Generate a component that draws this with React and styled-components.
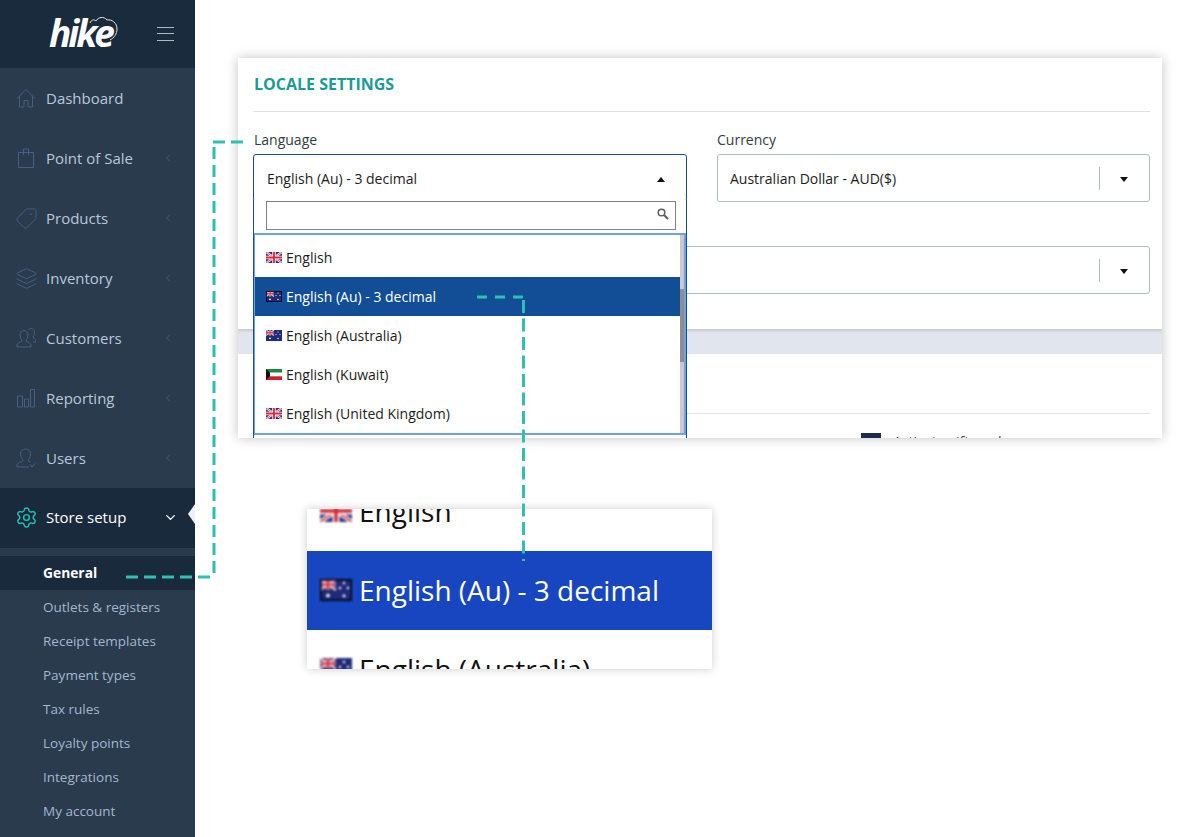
import styled, { createGlobalStyle } from "styled-components"
import { Settings, Tag, Layers, ChevronLeft, ChevronDown } from "lucide-react"

const GlobalStyle = createGlobalStyle`
    html, body {
        margin: 0;
        padding: 0;
        background: #fff;
        font-family: "Open Sans", "Noto Sans", sans-serif;
    }
    * { box-sizing: border-box; }
`

const Page = styled.div`
    position: relative;
    display: flex;
    width: 1185px;
    height: 837px;
    overflow: hidden;
    background: #fff;
`

/* sidebar */
const Sidebar = styled.aside`
    width: 195px;
    flex-shrink: 0;
    background: #293b4d;
`
const LogoBar = styled.div`
    height: 68px;
    background: #1b2b3e;
    display: flex;
    align-items: center;
    padding: 0 21px 0 49px;
    justify-content: space-between;
`
const Logo = styled.div`
    position: relative;
    width: 68px;
    height: 36px;
    color: #fff;
    font-family: "Open Sans", sans-serif;
    font-size: 37px;
    font-weight: 700;
    font-style: italic;
    letter-spacing: -3px;
    line-height: 34px;
    svg {
        position: absolute;
        left: 40px;
        top: -1px;
    }
`
const Burger = styled.div`
    width: 17px;
    height: 14px;
    border-top: 1px solid #aeb8c2;
    border-bottom: 1px solid #aeb8c2;
    position: relative;
    &::after {
        content: "";
        position: absolute;
        left: 0;
        right: 0;
        top: 5px;
        height: 1px;
        background: #aeb8c2;
    }
`
const NavItem = styled.div`
    position: relative;
    height: 60px;
    display: flex;
    align-items: center;
    padding: 0 16px ${props => props.$active ? "2px" : "0"};
    gap: 10px;
    font-size: 15px;
    color: ${props => props.$active ? "#fff" : "#b9c8da"};
    font-weight: ${props => props.$active ? 500 : 400};
    background: ${props => props.$active ? "#1a2a3d" : "transparent"};
    span { flex: 1; }
    ${props => props.$active && `
        &::after {
            content: "";
            position: absolute;
            right: 0;
            top: 16px;
            border-top: 10px solid transparent;
            border-bottom: 10px solid transparent;
            border-right: 7px solid #eef1f7;
        }
    `}
`
const IconSlot = styled.div`
    width: 20px;
    height: 20px;
    flex-shrink: 0;
    display: flex;
    align-items: center;
    justify-content: center;
    color: ${props => props.$active ? "#22c1b0" : "#465f82"};
    svg {
        width: 20px;
        height: 20px;
        flex-shrink: 0;
    }
    svg.lucide {
        width: 23px;
        height: 23px;
    }
`
const SubList = styled.div`
    margin-top: 8px;
`
const SubItem = styled.div`
    height: 34px;
    display: flex;
    align-items: center;
    padding: 0 0 ${props => props.$active ? "2px" : "0"} 43px;
    font-size: ${props => props.$active ? "13.8px" : "13.5px"};
    color: ${props => props.$active ? "#fff" : "#a3b7cd"};
    font-weight: ${props => props.$active ? 700 : 400};
    background: ${props => props.$active ? "#1a2a3d" : "transparent"};
`

/* main */
const Main = styled.main`
    flex: 1;
    padding: 58px 23px 0 43px;
`
const Card = styled.section`
    width: 924px;
    height: 380px;
    background: #fff;
    overflow: hidden;
    box-shadow: 0 0 11px rgba(0, 0, 0, 0.24);
`
const Section = styled.div`
    height: 271px;
    padding: 0 12px 0 15px;
`
const Title = styled.h2`
    margin: 0 0 18px;
    height: 54px;
    padding-top: 15px;
    padding-left: 1px;
    font-size: 16px;
    line-height: 22px;
    font-weight: 700;
    color: #1a9c94;
    border-bottom: 1px solid #e2e2e2;
`
const FieldGrid = styled.div`
    display: grid;
    grid-template-columns: 434px 433px;
    column-gap: 30px;
    row-gap: 20px;
`
const Field = styled.div`
    grid-column: ${props => props.$wide ? "1 / -1" : "auto"};
    position: relative;
`
const Label = styled.div`
    font-size: 14px;
    line-height: 19px;
    height: 24px;
    padding-left: ${props => props.$inset ? "1px" : "0"};
    color: #333c44;
`
const Select = styled.div`
    height: 48px;
    border: 1px solid ${props => props.$open ? "#124e96" : "#a9c0bf"};
    border-radius: 3px;
    display: flex;
    align-items: center;
    padding: 0 20px 0 ${props => props.$open ? "13px" : "12px"};
    font-size: 14px;
    color: #1c1c1c;
    span { flex: 1; }
`
const Divider = styled.i`
    width: 1px;
    height: 23px;
    background: #a9c0bf;
    margin-right: 20px;
`
const Arrow = styled.i`
    width: 0;
    height: 0;
    margin: 2px 1px 0 0;
    border-left: 4px solid transparent;
    border-right: 4px solid transparent;
    ${props => props.$up ? "border-bottom: 5px solid #111;" : "border-top: 5px solid #111;"}
`
const Dropdown = styled.div`
    position: absolute;
    left: 0;
    top: 70px;
    width: 434px;
    height: 240px;
    background: #fff;
    z-index: 2;
    border-left: 1px solid #124e96;
    border-right: 1px solid #124e96;
`
const SearchBox = styled.div`
    margin: 1px 10px 3px 12px;
    height: 29px;
    border: 1px solid #808080;
    display: flex;
    align-items: center;
    justify-content: flex-end;
    padding: 0 6px 4px 0;
`
const List = styled.div`
    position: relative;
    height: 202px;
    border: 2px solid #6f9ff0;
    border-left-width: 1px;
    padding: 3px 4px 0 0;
`
const Track = styled.div`
    position: absolute;
    right: 0;
    top: 0;
    bottom: 0;
    width: 4px;
    background: #c9c9c9;
    &::after {
        content: "";
        position: absolute;
        left: 0;
        right: 0;
        top: 54px;
        height: 73px;
        background: #8e8e8e;
    }
`
const Option = styled.div`
    height: 39px;
    display: flex;
    align-items: center;
    gap: 4px;
    padding-left: 11px;
    font-size: 14px;
    background: ${props => props.$selected ? "#124e96" : "#fff"};
    color: ${props => props.$selected ? "#fff" : "#1c1c1c"};
`
const Band = styled.div`
    height: 25px;
    background: #e1e5ed;
    box-shadow: inset 0 4px 3px -2px rgba(0, 0, 0, 0.12);
`
const SecondHead = styled.div`
    height: 60px;
    margin: 0 12px 0 16px;
    border-bottom: 1px solid #e2e2e2;
`
const Legend = styled.div`
    display: flex;
    align-items: center;
    gap: 12px;
    margin: 18px 0 0 623px;
    font-size: 14px;
    color: #333c44;
    i {
        width: 20px;
        height: 18px;
        background: #1f2a4a;
    }
`

/* enlarged row */
const Callout = styled.div`
    width: 405px;
    height: 160px;
    margin: 71px 0 0 69px;
    background: #fff;
    overflow: hidden;
    box-shadow: 0 0 9px rgba(0, 0, 0, 0.2);
`
const CalloutRow = styled.div`
    height: 79px;
    display: flex;
    align-items: center;
    gap: 7px;
    padding: 0 0 2px 13px;
    font-size: 28px;
    white-space: nowrap;
    background: ${props => props.$selected ? "#1746c0" : "#fff"};
    color: ${props => props.$selected ? "#fff" : "#111"};
    &:first-child { margin-top: -37px; }
    svg { filter: blur(0.9px); }
`
const Guides = styled.svg`
    position: absolute;
    left: 0;
    top: 0;
    z-index: 5;
    pointer-events: none;
`

const HomeIcon = () => (
    <svg viewBox="0 0 20 20" fill="none" stroke="currentColor" strokeWidth="1">
        <path d="M1 10.500 10 1.500l9 9M3.500 8.500v10.500h4.500v-6.500h4v6.500h4.500V8.500" />
    </svg>
)
const BagIcon = () => (
    <svg viewBox="0 0 20 20" fill="none" stroke="currentColor" strokeWidth="1">
        <path d="M2.500 4.500h15v15h-15zM7.500 7V1h5v6" />
    </svg>
)
const ReportIcon = () => (
    <svg viewBox="0 0 20 20" fill="none" stroke="currentColor" strokeWidth="1">
        <path d="M1.500 8h5v11h-5zM8.500 11h4v8h-4zM14.500 1.500h4V19h-4z" />
    </svg>
)
const CustomersIcon = () => (
    <svg viewBox="0 0 20 20" fill="none" stroke="currentColor" strokeWidth="1">
        <path d="M1 19v-2c0-2 4-3 5-4 0-1-2-3-2-6 0-3 2-4.500 4-4.500s4 1.500 4 4.500c0 3-2 5-2 6 1 1 5 2 5 4v2zM12 2c1-1 2-1.500 3-1.500 2 0 3.500 1.500 3.500 4 0 2.500-1.500 4-1.500 5 1 1 3 1.500 3 3.500v1h-3" />
    </svg>
)
const UserIcon = () => (
    <svg viewBox="0 0 20 20" fill="none" stroke="currentColor" strokeWidth="1">
        <path d="M1 19v-2c0-2 4.500-3 6-4.500 0-1-2.500-3-2.500-6.500 0-3.300 2.500-5 5-5s5 1.700 5 5c0 3.500-2.500 5.500-2.500 6.500.5.500 1.500 1 2.500 1.500M1 19h12M14 16.500l2 2.500 3-3.500" />
    </svg>
)
const SearchIcon = () => (
    <svg width="12" height="12" viewBox="0 0 12 12" fill="none" stroke="#5f5f5f">
        <circle cx="4.500" cy="4.500" r="3.300" strokeWidth="1.500" />
        <path d="M7 7l4 4" strokeWidth="2.200" />
    </svg>
)

const UkFlag = ({ w = 16 }) => (
    <svg width={w} height={w * 0.6875} viewBox="0 0 16 11">
        <rect width="16" height="11" fill="#27337f" />
        <path d="M0 0 16 11M16 0 0 11" stroke="#fff" strokeWidth="2.200" />
        <path d="M0 0 16 11M16 0 0 11" stroke="#d8283a" strokeWidth="0.800" />
        <path d="M8 0v11M0 5.500h16" stroke="#fff" strokeWidth="3.400" />
        <path d="M8 0v11M0 5.500h16" stroke="#d8283a" strokeWidth="1.800" />
    </svg>
)
const AuFlag = ({ w = 16, framed }) => (
    <svg width={w} height={w * 0.6875} viewBox="0 0 16 11">
        <rect width="16" height="11" fill="#1f2a78" />
        <path d="M0 0 8 5.500M8 0 0 5.500" stroke="#e8c0c8" strokeWidth="1.200" />
        <path d="M4 0v5.500M0 2.700h8" stroke="#f0d0d4" strokeWidth="1.800" />
        <path d="M4 0v5.500M0 2.700h8" stroke="#d8283a" strokeWidth="1" />
        <circle cx="4" cy="8.300" r="0.900" fill="#fff" />
        <circle cx="12" cy="2" r="0.600" fill="#fff" />
        <circle cx="10" cy="4.500" r="0.600" fill="#fff" />
        <circle cx="14" cy="4.500" r="0.600" fill="#fff" />
        <circle cx="12" cy="8.500" r="0.700" fill="#fff" />
        {framed && <rect x="0.400" y="0.400" width="15.200" height="10.200" fill="none" stroke="#050510" strokeWidth="0.800" />}
    </svg>
)
const KwFlag = ({ w = 16 }) => (
    <svg width={w} height={w * 0.6875} viewBox="0 0 16 11">
        <rect width="16" height="3.700" fill="#1c8a3c" />
        <rect y="3.700" width="16" height="3.600" fill="#fff" />
        <rect y="7.300" width="16" height="3.700" fill="#d21f2c" />
        <path d="M0 0 4 3.700v3.600L0 11z" fill="#111" />
    </svg>
)

const navItems = [
    { label: "Dashboard", icon: <HomeIcon /> },
    { label: "Point of Sale", icon: <BagIcon />, more: true },
    { label: "Products", icon: <Tag strokeWidth={1} style={{ transform: "scaleX(-1)" }} />, more: true },
    { label: "Inventory", icon: <Layers strokeWidth={1} />, more: true },
    { label: "Customers", icon: <CustomersIcon />, more: true },
    { label: "Reporting", icon: <ReportIcon />, more: true },
    { label: "Users", icon: <UserIcon />, more: true },
]

const subItems = ["General", "Outlets & registers", "Receipt templates", "Payment types", "Tax rules", "Loyalty points", "Integrations", "My account"]

const languages = [
    { label: "English", flag: <UkFlag /> },
    { label: "English (Au) - 3 decimal", flag: <AuFlag framed />, selected: true },
    { label: "English (Australia)", flag: <AuFlag /> },
    { label: "English (Kuwait)", flag: <KwFlag /> },
    { label: "English (United Kingdom)", flag: <UkFlag /> },
]

const App = () => {
    return (
        <Page>
            <GlobalStyle />
            <Sidebar>
                <LogoBar>
                    <Logo>
                        hike
                        <svg width="29" height="30" viewBox="0 0 29 30" fill="none" stroke="#dfe5ea" strokeWidth="1">
                            <path d="M1 8c1-3 4-4 6-2 2-4 8-5 11-1 5-1 10 3 10 9 0 5-3 9-7 11" />
                        </svg>
                    </Logo>
                    <Burger />
                </LogoBar>
                {navItems.map(item => (
                    <NavItem key={item.label}>
                        <IconSlot>{item.icon}</IconSlot>
                        <span>{item.label}</span>
                        {item.more && <ChevronLeft size={12} color="#42597a" style={{ marginRight: 5 }} />}
                    </NavItem>
                ))}
                <NavItem $active>
                    <IconSlot $active><Settings strokeWidth={1.500} /></IconSlot>
                    <span>Store setup</span>
                    <ChevronDown size={15} color="#fff" strokeWidth={2.200} style={{ marginRight: 1 }} />
                </NavItem>
                <SubList>
                    {subItems.map((label, i) => (
                        <SubItem key={label} $active={i === 0}>{label}</SubItem>
                    ))}
                </SubList>
            </Sidebar>

            <Main>
                <Card>
                    <Section>
                        <Title>LOCALE SETTINGS</Title>
                        <FieldGrid>
                            <Field>
                                <Label $inset>Language</Label>
                                <Select $open>
                                    <span>English (Au) - 3 decimal</span>
                                    <Arrow $up />
                                </Select>
                                <Dropdown>
                                    <SearchBox><SearchIcon /></SearchBox>
                                    <List>
                                        {languages.map(lang => (
                                            <Option key={lang.label} $selected={lang.selected}>
                                                {lang.flag}
                                                {lang.label}
                                            </Option>
                                        ))}
                                        <Track />
                                    </List>
                                </Dropdown>
                            </Field>
                            <Field>
                                <Label>Currency</Label>
                                <Select>
                                    <span>Australian Dollar - AUD($)</span>
                                    <Divider />
                                    <Arrow />
                                </Select>
                            </Field>
                            <Field $wide>
                                <Label />
                                <Select>
                                    <span />
                                    <Divider />
                                    <Arrow />
                                </Select>
                            </Field>
                        </FieldGrid>
                    </Section>
                    <Band />
                    <SecondHead />
                    <Legend><i />Activate gift card</Legend>
                </Card>

                <Callout>
                    <CalloutRow><UkFlag w={32} />English</CalloutRow>
                    <CalloutRow $selected><AuFlag w={32} framed />English (Au) - 3 decimal</CalloutRow>
                    <CalloutRow><AuFlag w={32} />English (Australia)</CalloutRow>
                </Callout>
            </Main>

            <Guides width="1185" height="837" fill="none" stroke="#2fc0b3" strokeWidth="3">
                <path d="M126 577H214" strokeDasharray="12 6" />
                <path d="M214 573V142" strokeDasharray="12 6" />
                <path d="M243 142H213" strokeDasharray="12 6" />
                <path d="M477 297H525" strokeDasharray="10 8" />
                <path d="M523.500 300V561" strokeDasharray="13 5.500" />
            </Guides>
        </Page>
    )
}

export default App
